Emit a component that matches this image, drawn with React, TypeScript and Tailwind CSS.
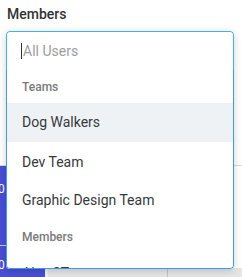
export default function App() {
  const teams = ["Dog Walkers", "Dev Team", "Graphic Design Team"];
  return (
    <div className="relative w-[242px] h-[277px] overflow-hidden bg-white font-['Roboto',sans-serif]">
      {/* Page behind the menu */}
      <div className="flex flex-col h-full">
        <div className="h-[31px] px-[7px] pt-[5px] text-[14px] leading-[18px] font-medium text-[#333]">
          Members
        </div>
        <div className="h-[134px]" />
        <div className="flex flex-1 border-t border-[#d9d9d9]">
          <div className="w-[45px] bg-[#4a4fd6] flex flex-col text-white text-[12px]">
            <div className="h-[79px] pt-[14px] -ml-[2px]">0</div>
            <div className="border-t border-[#c9cbf3] pt-[10px] -ml-[2px]">0</div>
          </div>
          <div className="flex-1 flex flex-col">
            <div className="flex-1" />
            <div className="h-[9px] bg-[#e6e6e6] border-l-[3px] border-[#f2f2f2] flex">
              <div className="w-[119px]" />
              <div className="w-px bg-[#c4c4c4]" />
            </div>
          </div>
        </div>
      </div>

      {/* Select with open menu */}
      <div className="absolute left-[6px] top-[31px] w-[228px] h-[238px] flex flex-col rounded-[4px] shadow-[0_2px_8px_rgba(0,0,0,0.18)] bg-white overflow-hidden">
        <div className="h-[39px] border border-b-0 border-[#3ab0ff] rounded-t-[4px] flex items-center pl-[14px]">
          <span className="w-px h-[16px] bg-[#333] mr-[1px]" />
          <span className="text-[14px] text-[#9e9e9e]">All Users</span>
        </div>
        <div className="flex-1 border-x border-b border-[#3d9be9] rounded-b-[4px] overflow-hidden">
          <div className="h-[33px] flex items-center pl-[15px] text-[12px] font-medium text-[#7a7a7a]">
            Teams
          </div>
          {teams.map((t, i) => (
            <div
              key={t}
              className={`flex items-center pl-[15px] text-[14px] text-[#37393c] ${i === 0 ? "h-[39px] bg-[#eef2f5]" : "h-[38px] pt-[2px]"}`}
            >
              {t}
            </div>
          ))}
          <div className="h-[36px] flex items-center pl-[15px] pt-[2px] text-[12px] font-medium text-[#7a7a7a]">
            Members
          </div>
          <div className="h-[38px] flex items-center pl-[15px] text-[14px] text-[#37393c]">
            Alex ST
          </div>
        </div>
      </div>
    </div>
  );
}
